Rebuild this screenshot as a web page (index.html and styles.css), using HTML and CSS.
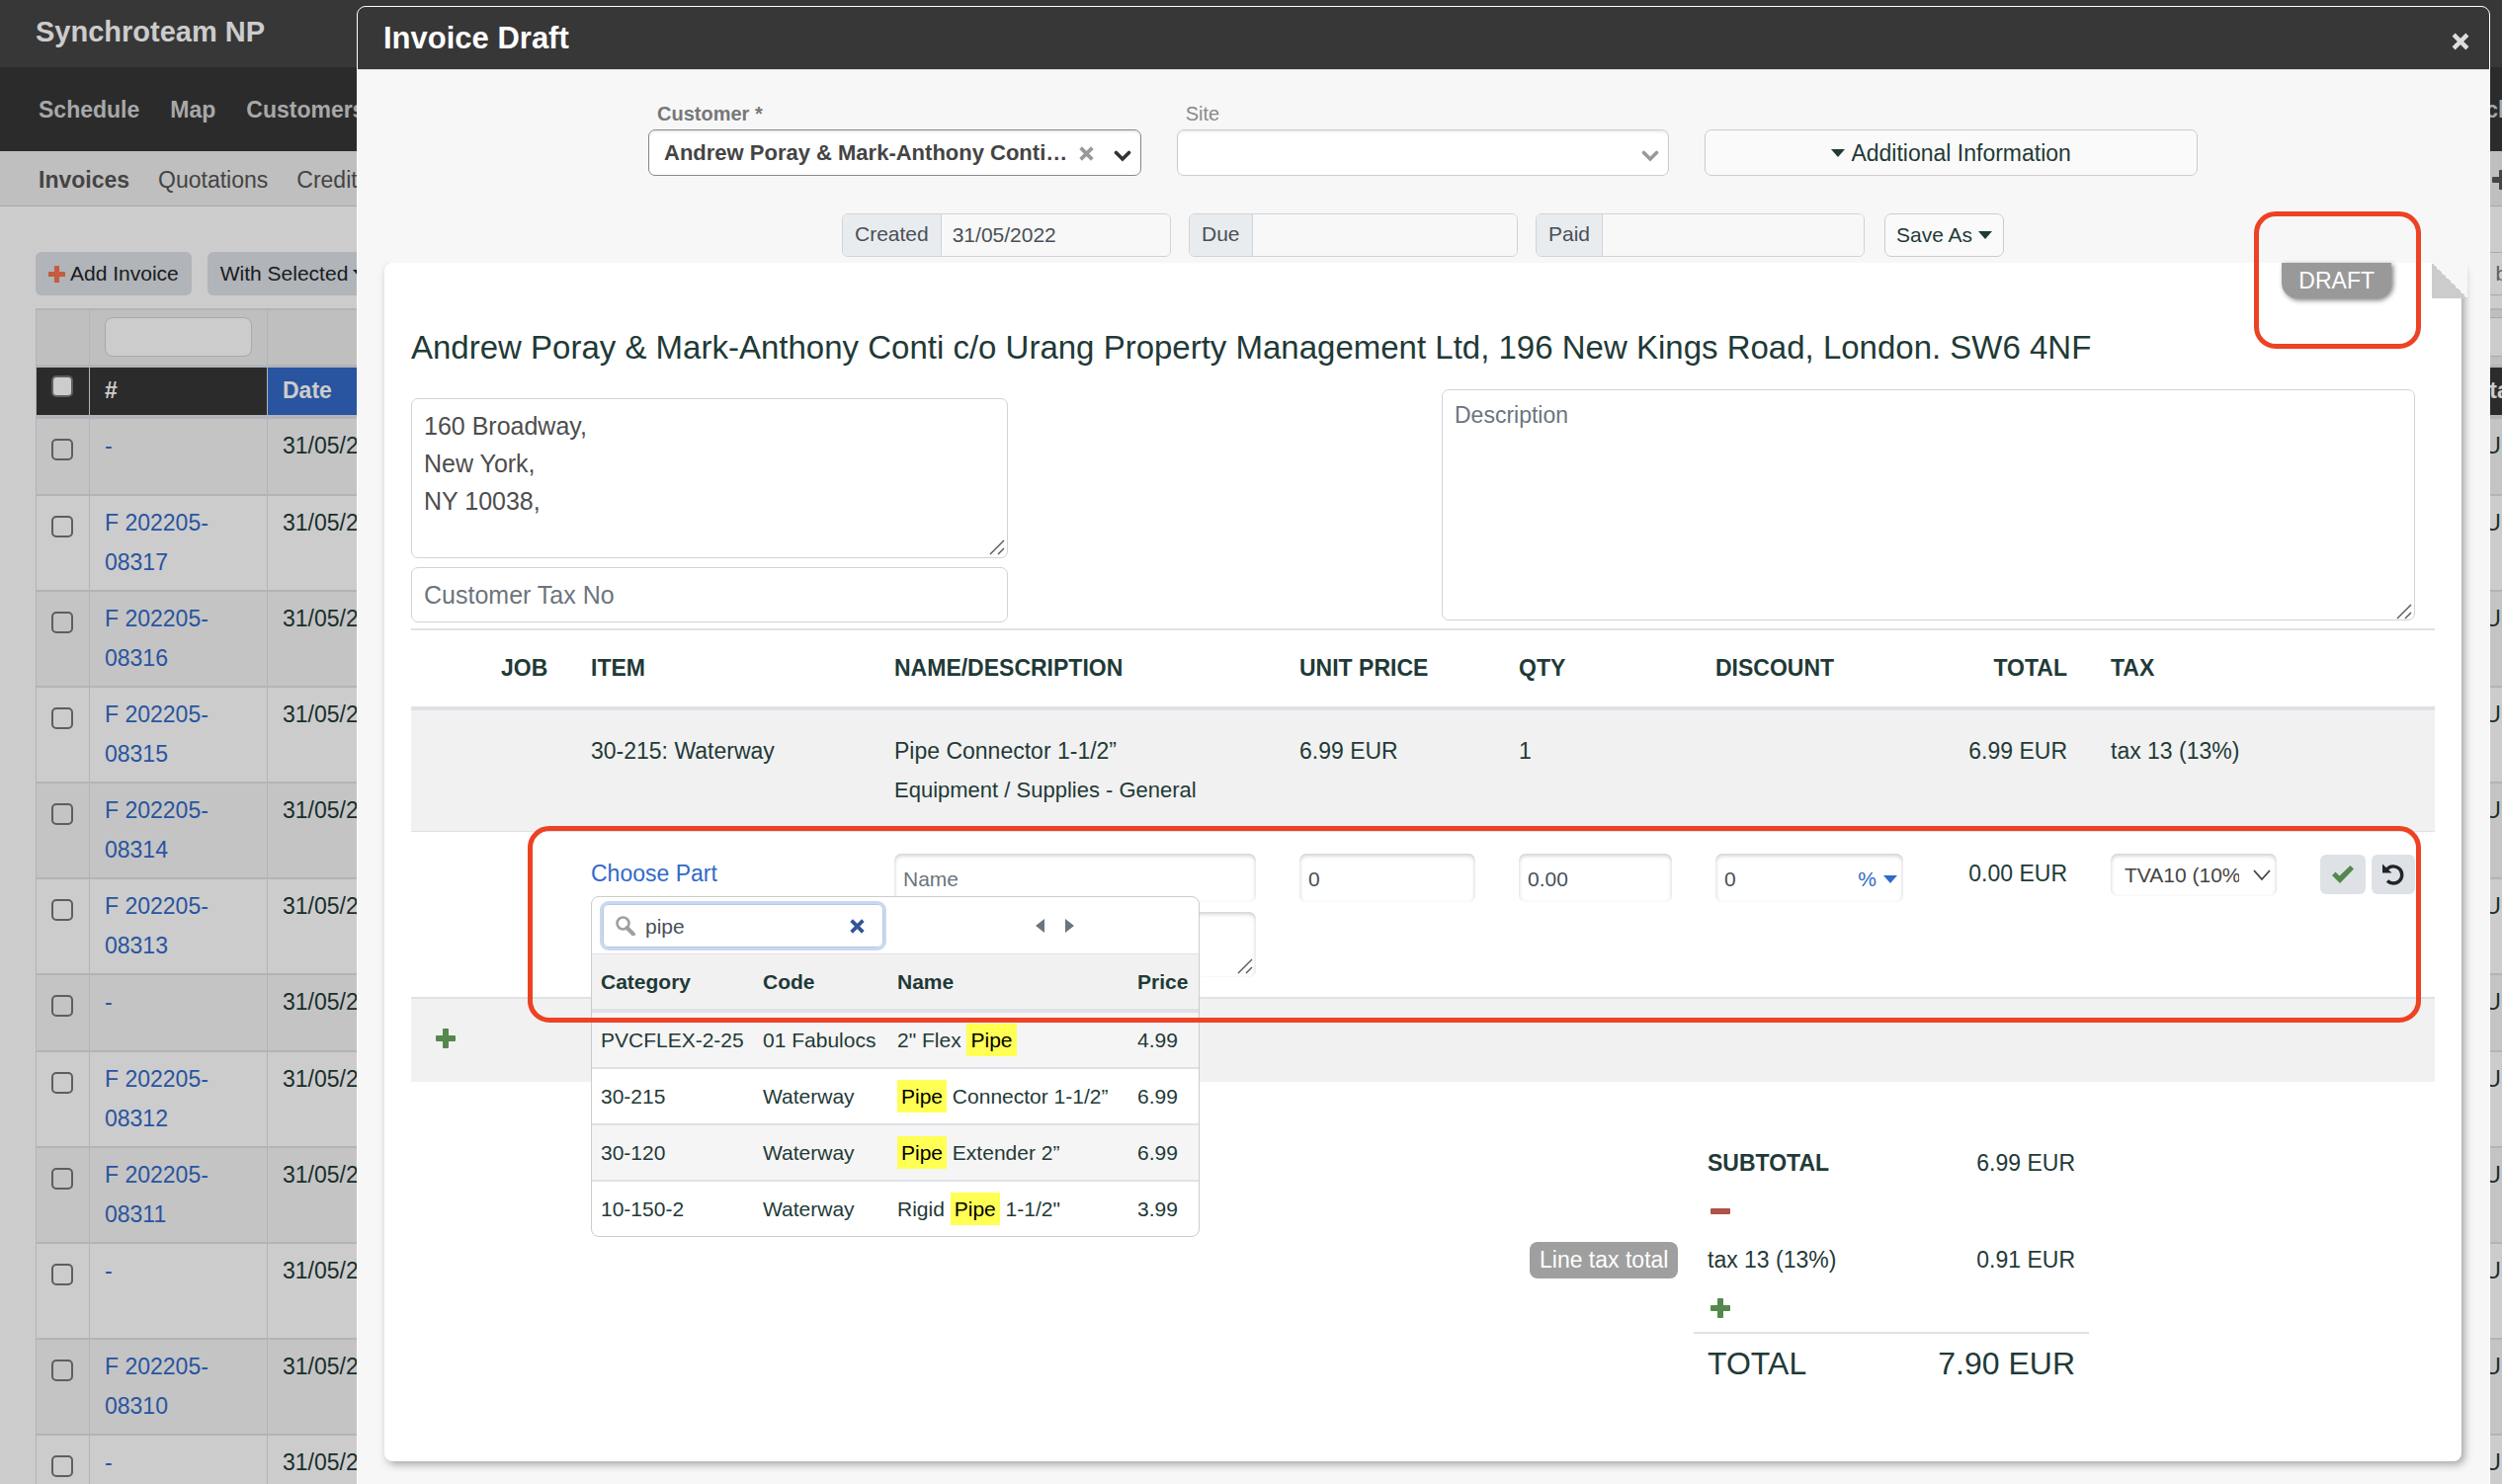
FILE: index.html
```html
<!DOCTYPE html>
<html lang="en">
<head>
  <meta charset="UTF-8" />
  <meta name="viewport" content="width=device-width, initial-scale=1.0" />
  <title>Invoice Draft - Synchroteam NP</title>
  <link rel="stylesheet" href="styles.css">
</head>

<body>

  <!-- Shared icons -->
  <svg class="sprite" aria-hidden="true">
    <symbol id="i-plus" viewBox="0 0 20 20">
      <rect x="0" y="7" width="20" height="6" rx="1" />
      <rect x="7" y="0" width="6" height="20" rx="1" />
    </symbol>
    <symbol id="i-minus" viewBox="0 0 20 20">
      <rect x="0" y="7" width="20" height="6" rx="1" />
    </symbol>
    <symbol id="i-times" viewBox="0 0 16 16">
      <path d="M2.500 2.500L13.500 13.500M13.500 2.500L2.500 13.500" fill="none" stroke="currentColor" stroke-width="3.5" stroke-linecap="butt" />
    </symbol>
    <symbol id="i-chevron" viewBox="0 0 18 12">
      <path d="M2.500 2.500L9 9L15.500 2.500" fill="none" stroke="currentColor" stroke-width="3.6" stroke-linecap="round" />
    </symbol>
    <symbol id="i-chevron-thin" viewBox="0 0 18 12">
      <path d="M1 1L9 10L17 1" fill="none" stroke="currentColor" stroke-width="1.8" />
    </symbol>
    <symbol id="i-caret" viewBox="0 0 14 8">
      <path d="M0 0H14L7 8Z" />
    </symbol>
    <symbol id="i-check" viewBox="0 0 22 18">
      <path d="M0 10L3.500 6.500L7.500 10.500L18.500 0L22 3.500L8 18Z" />
    </symbol>
    <symbol id="i-undo" viewBox="0 0 22 22">
      <path d="M4.500 6A8.600 8.600 0 1 1 5 17.500" fill="none" stroke="currentColor" stroke-width="3.4" />
      <path d="M0 0.500L9.500 9.500H0Z" />
    </symbol>
    <symbol id="i-search" viewBox="0 0 20 20">
      <circle cx="7.500" cy="7.500" r="6" fill="none" stroke="currentColor" stroke-width="2.6" />
      <path d="M11.500 12L18 18.500" fill="none" stroke="currentColor" stroke-width="4" stroke-linecap="round" />
    </symbol>
    <symbol id="i-grip" viewBox="0 0 16 16">
      <path d="M1 15L15 1M9 15L15 9" fill="none" stroke="currentColor" stroke-width="1.4" />
    </symbol>
  </svg>

  <!-- Invoice list behind the modal -->
  <div class="page">
    <header class="topbar">Synchroteam NP</header>

    <nav class="main-nav">
      <a href="#">Schedule</a>
      <a href="#">Map</a>
      <a href="#">Customers</a>
      <a href="#" class="push">Search</a>
    </nav>

    <nav class="sub-nav">
      <a href="#" class="active">Invoices</a>
      <a href="#">Quotations</a>
      <a href="#">Credit Notes</a>
      <a href="#" class="push" aria-label="Add"><svg class="icon-20"><use href="#i-plus" /></svg></a>
    </nav>

    <main class="list">
      <div class="toolbar">
        <button class="btn"><svg class="icon-17 orange"><use href="#i-plus" /></svg>Add Invoice</button>
        <button class="btn">With Selected <svg class="caret"><use href="#i-caret" /></svg></button>
        <input type="text" class="filter-by" placeholder="Filter by" aria-label="Filter by" />
      </div>

      <table class="invoices">
        <colgroup>
          <col class="c-check"><col class="c-no"><col class="c-date"><col><col class="c-total">
        </colgroup>
        <thead>
          <tr class="filters">
            <td></td>
            <td><input type="text" aria-label="Filter number" /></td>
            <td></td>
            <td></td>
            <td><input type="text" aria-label="Filter status" /></td>
          </tr>
          <tr class="heads">
            <th><input type="checkbox" aria-label="Select all" /></th>
            <th>#</th>
            <th class="sorted">Date</th>
            <th></th>
            <th class="status">Status</th>
          </tr>
        </thead>
        <tbody>
          <tr>
            <td><input type="checkbox" aria-label="Select" /></td>
            <td><a href="#">-</a></td><td>31/05/2022</td><td></td><td>EUR</td>
          </tr>
          <tr>
            <td><input type="checkbox" aria-label="Select" /></td>
            <td><a href="#">F 202205-<br>08317</a></td><td>31/05/2022</td><td></td><td>EUR</td>
          </tr>
          <tr>
            <td><input type="checkbox" aria-label="Select" /></td>
            <td><a href="#">F 202205-<br>08316</a></td><td>31/05/2022</td><td></td><td>EUR</td>
          </tr>
          <tr>
            <td><input type="checkbox" aria-label="Select" /></td>
            <td><a href="#">F 202205-<br>08315</a></td><td>31/05/2022</td><td></td><td>EUR</td>
          </tr>
          <tr>
            <td><input type="checkbox" aria-label="Select" /></td>
            <td><a href="#">F 202205-<br>08314</a></td><td>31/05/2022</td><td></td><td>EUR</td>
          </tr>
          <tr>
            <td><input type="checkbox" aria-label="Select" /></td>
            <td><a href="#">F 202205-<br>08313</a></td><td>31/05/2022</td><td></td><td>EUR</td>
          </tr>
          <tr>
            <td><input type="checkbox" aria-label="Select" /></td>
            <td><a href="#">-</a></td><td>31/05/2022</td><td></td><td>EUR</td>
          </tr>
          <tr>
            <td><input type="checkbox" aria-label="Select" /></td>
            <td><a href="#">F 202205-<br>08312</a></td><td>31/05/2022</td><td></td><td>EUR</td>
          </tr>
          <tr>
            <td><input type="checkbox" aria-label="Select" /></td>
            <td><a href="#">F 202205-<br>08311</a></td><td>31/05/2022</td><td></td><td>EUR</td>
          </tr>
          <tr class="tall">
            <td><input type="checkbox" aria-label="Select" /></td>
            <td><a href="#">-</a></td><td>31/05/2022</td><td></td><td>EUR</td>
          </tr>
          <tr>
            <td><input type="checkbox" aria-label="Select" /></td>
            <td><a href="#">F 202205-<br>08310</a></td><td>31/05/2022</td><td></td><td>EUR</td>
          </tr>
          <tr>
            <td><input type="checkbox" aria-label="Select" /></td>
            <td><a href="#">-</a></td><td>31/05/2022</td><td></td><td>EUR</td>
          </tr>
        </tbody>
      </table>
    </main>
  </div>

  <!-- Modal -->
  <div class="backdrop">
    <div class="modal" role="dialog" aria-labelledby="modalTitle">
      <div class="modal-header">
        <h1 id="modalTitle">Invoice Draft</h1>
        <button class="close" aria-label="Close"><svg class="icon-20"><use href="#i-times" /></svg></button>
      </div>

      <div class="modal-body">
        <div class="pickers">
          <div class="picker required">
            <label for="customer">Customer *</label>
            <div class="select-box">
              <select id="customer">
                <option>Andrew Poray &amp; Mark-Anthony Conti…</option>
              </select>
              <button class="clear" aria-label="Clear customer"><svg class="icon-17"><use href="#i-times" /></svg></button>
              <svg class="chevron"><use href="#i-chevron" /></svg>
            </div>
          </div>
          <div class="picker">
            <label for="site">Site</label>
            <div class="select-box">
              <select id="site"><option></option></select>
              <svg class="chevron"><use href="#i-chevron" /></svg>
            </div>
          </div>
          <button class="more-info"><svg class="caret"><use href="#i-caret" /></svg>Additional Information</button>
        </div>

        <div class="dates">
          <div class="date-group">
            <label for="created">Created</label>
            <input type="text" id="created" value="31/05/2022" />
          </div>
          <div class="date-group">
            <label for="due">Due</label>
            <input type="text" id="due" />
          </div>
          <div class="date-group">
            <label for="paid">Paid</label>
            <input type="text" id="paid" />
          </div>
          <button class="save-as">Save As <svg class="caret"><use href="#i-caret" /></svg></button>
        </div>

        <div class="paper">
          <div class="fold"></div>
          <div class="draft">DRAFT</div>

          <h2>Andrew Poray &amp; Mark-Anthony Conti c/o Urang Property Management Ltd, 196 New Kings Road, London. SW6 4NF</h2>

          <div class="details">
            <div class="customer-side">
              <div class="area">
                <textarea class="address" aria-label="Address">160 Broadway,
New York,
NY 10038,</textarea>
                <svg class="grip"><use href="#i-grip" /></svg>
              </div>
              <input type="text" class="tax-no" placeholder="Customer Tax No" aria-label="Customer Tax No" />
            </div>
            <div class="area description">
              <textarea placeholder="Description" aria-label="Description"></textarea>
              <svg class="grip"><use href="#i-grip" /></svg>
            </div>
          </div>

          <!-- Invoice lines -->
          <table class="lines">
            <colgroup>
              <col class="l-add"><col class="l-job"><col class="l-item"><col><col class="l-price">
              <col class="l-qty"><col class="l-discount"><col class="l-total"><col class="l-tax"><col class="l-actions">
            </colgroup>
            <thead>
              <tr>
                <th></th>
                <th>JOB</th>
                <th>ITEM</th>
                <th>NAME/DESCRIPTION</th>
                <th>UNIT PRICE</th>
                <th>QTY</th>
                <th>DISCOUNT</th>
                <th class="right">TOTAL</th>
                <th>TAX</th>
                <th></th>
              </tr>
            </thead>
            <tbody>
              <tr class="shaded">
                <td></td>
                <td></td>
                <td>30-215: Waterway</td>
                <td>
                  Pipe Connector 1-1/2”
                  <div class="line-note">Equipment / Supplies - General</div>
                </td>
                <td>6.99 EUR</td>
                <td>1</td>
                <td></td>
                <td class="right">6.99 EUR</td>
                <td>tax 13 (13%)</td>
                <td></td>
              </tr>
              <tr class="editing">
                <td></td>
                <td></td>
                <td>
                  <div class="part">
                    <a href="#">Choose Part</a>

                    <!-- Part search results -->
                    <div class="part-menu">
                      <div class="part-search">
                        <div class="search-box">
                          <svg class="icon-20 grey"><use href="#i-search" /></svg>
                          <input type="text" value="pipe" aria-label="Search part" />
                          <button class="reset" aria-label="Clear search"><svg class="icon-17"><use href="#i-times" /></svg></button>
                        </div>
                        <div class="pager">
                          <button aria-label="Previous"><svg viewBox="0 0 9 14"><path d="M9 0V14L0 7Z" /></svg></button>
                          <button aria-label="Next"><svg viewBox="0 0 9 14"><path d="M0 0V14L9 7Z" /></svg></button>
                        </div>
                      </div>
                      <table class="parts">
                        <colgroup>
                          <col class="p-category"><col class="p-code"><col><col class="p-price">
                        </colgroup>
                        <thead>
                          <tr><th>Category</th><th>Code</th><th>Name</th><th>Price</th></tr>
                        </thead>
                        <tbody>
                          <tr><td>PVCFLEX-2-25</td><td>01 Fabulocs</td><td>2" Flex <mark>Pipe</mark></td><td>4.99</td></tr>
                          <tr><td>30-215</td><td>Waterway</td><td><mark>Pipe</mark> Connector 1-1/2”</td><td>6.99</td></tr>
                          <tr><td>30-120</td><td>Waterway</td><td><mark>Pipe</mark> Extender 2”</td><td>6.99</td></tr>
                          <tr><td>10-150-2</td><td>Waterway</td><td>Rigid <mark>Pipe</mark> 1-1/2"</td><td>3.99</td></tr>
                        </tbody>
                      </table>
                    </div>
                  </div>
                </td>
                <td>
                  <input type="text" class="field" placeholder="Name" aria-label="Name" />
                  <div class="area note">
                    <textarea class="field" aria-label="Line description"></textarea>
                    <svg class="grip"><use href="#i-grip" /></svg>
                  </div>
                </td>
                <td><input type="text" class="field" value="0" aria-label="Unit price" /></td>
                <td><input type="text" class="field" value="0.00" aria-label="Quantity" /></td>
                <td>
                  <div class="field discount">
                    <input type="text" value="0" aria-label="Discount" />
                    <button>% <svg class="caret"><use href="#i-caret" /></svg></button>
                  </div>
                </td>
                <td class="right">0.00 EUR</td>
                <td>
                  <div class="select-box tax">
                    <select class="field" aria-label="Tax"><option>TVA10 (10%)</option></select>
                    <svg class="chevron"><use href="#i-chevron-thin" /></svg>
                  </div>
                </td>
                <td class="actions">
                  <div class="action-row">
                    <button class="confirm" aria-label="Confirm"><svg viewBox="0 0 22 18"><use href="#i-check" /></svg></button>
                    <button class="undo" aria-label="Undo"><svg viewBox="0 0 22 22"><use href="#i-undo" /></svg></button>
                  </div>
                </td>
              </tr>
              <tr class="shaded add-row">
                <td colspan="10"><button class="bare" aria-label="Add line"><svg class="icon-20 green"><use href="#i-plus" /></svg></button></td>
              </tr>
            </tbody>
          </table>

          <table class="totals">
            <tbody>
              <tr>
                <td></td>
                <th>SUBTOTAL</th>
                <td class="amount">6.99 EUR</td>
              </tr>
              <tr>
                <td></td>
                <td colspan="2"><button class="bare" aria-label="Remove tax"><svg class="icon-20 red"><use href="#i-minus" /></svg></button></td>
              </tr>
              <tr>
                <td class="tag-cell"><span class="tag">Line tax total</span></td>
                <td>tax 13 (13%)</td>
                <td class="amount">0.91 EUR</td>
              </tr>
              <tr>
                <td></td>
                <td colspan="2"><button class="bare" aria-label="Add tax"><svg class="icon-20 green"><use href="#i-plus" /></svg></button></td>
              </tr>
              <tr class="grand">
                <td></td>
                <td>TOTAL</td>
                <td class="amount">7.90 EUR</td>
              </tr>
            </tbody>
          </table>

          <!-- Callouts -->
          <div class="callout callout-draft"></div>
          <div class="callout callout-line"></div>
        </div>
      </div>
    </div>
  </div>

</body>
</html>
```
FILE: styles.css
```css
* {
  box-sizing: border-box;
}
body {
  margin: 0;
  height: 100vh;
  overflow: hidden;
  font-family: "Liberation Sans", Arial, sans-serif;
  font-size: 23px;
  line-height: 40px;
  color: #1f3a37;
  background: #fff;
}
a {
  color: #326ac8;
  text-decoration: none;
}
button, input, select, textarea {
  font: inherit;
  font-size: 21px;
  color: inherit;
  margin: 0;
}
button {
  padding: 0;
  border: 0;
  background: none;
}
table {
  border-collapse: separate;
  border-spacing: 0;
}
th {
  text-align: left;
}
svg {
  fill: currentColor;
  flex: none;
}
.sprite {
  position: absolute;
  width: 0;
  height: 0;
}
.icon-20 {
  width: 20px;
  height: 20px;
  display: block;
}
.icon-17 {
  width: 17px;
  height: 17px;
  display: block;
}
.caret {
  width: 14px;
  height: 8px;
}
.green {
  color: #55884d;
}
.red {
  color: #ae524a;
}
.orange {
  color: #f5734f;
}
.grey {
  color: #a0a0a0;
}
.right {
  text-align: right;
}

/* invoice list */
.page {
  width: calc(100% + 120px);
}
.topbar {
  height: 68px;
  padding: 0 36px;
  line-height: 64px;
  font-size: 29px;
  font-weight: bold;
  color: #fff;
  background: #454545;
}
.main-nav, .sub-nav {
  display: flex;
  align-items: center;
  gap: 29px;
  padding: 0 110px 0 39px;
}
.main-nav {
  height: 85px;
  gap: 31px;
  font-weight: bold;
  background: #363636;
}
.main-nav a {
  color: #d2d2d2;
}
.sub-nav {
  height: 56px;
  padding-top: 2px;
  background: #efefef;
  border-bottom: 1px solid #d4d4d4;
}
.sub-nav a {
  color: #555;
}
.sub-nav .active {
  font-weight: bold;
}
.push {
  margin-left: auto;
}
.list {
  padding: 46px 0 0 36px;
}
.toolbar {
  display: flex;
  gap: 16px;
  margin-bottom: 13px;
}
.btn {
  display: flex;
  align-items: center;
  gap: 5px;
  height: 44px;
  padding: 0 13px;
  border-radius: 6px;
  background: #dee2e6;
  color: #212529;
}
.filter-by {
  width: 180px;
  height: 44px;
  margin-left: auto;
  margin-right: 12px;
  padding: 0 12px;
  border: 1px solid #ced4da;
  border-radius: 6px;
}
.invoices {
  width: 100%;
  table-layout: fixed;
  border: 2px solid #dee2e6;
  border-width: 2px 0 0 1px;
}
.c-check {
  width: 54px;
}
.c-no {
  width: 180px;
}
.c-date {
  width: 160px;
}
.c-total {
  width: 168px;
}
.invoices td, .invoices th {
  padding: 7px 15px 8px;
  vertical-align: top;
  border-right: 1px solid #dee2e6;
}
.invoices .filters td {
  height: 57px;
  background: #efefef;
  border-bottom: 3px solid #dee2e6;
}
.filters input {
  display: block;
  width: 100%;
  height: 40px;
  border: 1px solid #d4d4d4;
  border-radius: 8px;
  background: #fff;
}
.invoices .heads th {
  height: 52px;
  padding-top: 3px;
  padding-bottom: 5px;
  background: #363636;
  color: #fff;
  border-bottom: 4px solid #dee2e6;
}
.invoices .heads .sorted {
  background: #326ac8;
}
.invoices .heads .status {
  padding-left: 20px;
}
.invoices tbody td {
  height: 78px;
  border-bottom: 2px solid #dee2e6;
}
.invoices .tall td {
  height: 97px;
}
.invoices tbody tr:nth-child(odd) {
  background: #f5f5f5;
}
.invoices input[type="checkbox"] {
  appearance: none;
  display: block;
  width: 22px;
  height: 22px;
  margin-top: 13px;
  border: 2px solid #767676;
  border-radius: 5px;
  background: #fff;
}
.invoices tbody input[type="checkbox"] {
  background: none;
}
.invoices .heads input[type="checkbox"] {
  margin-top: 5px;
}

/* modal */
.backdrop {
  position: fixed;
  inset: 0;
  overflow: hidden;
  padding: 6px 12px 0 361px;
  background: rgba(0, 0, 0, 0.2);
}
.modal {
  border: 1px solid #fff;
  border-radius: 9px;
  overflow: hidden;
  background: #f7f7f7;
}
.modal-header {
  display: flex;
  justify-content: space-between;
  align-items: center;
  height: 64px;
  padding: 0 19px 0 26px;
  background: #373737;
  border-bottom: 1px solid #dee2e6;
  color: #fff;
}
.modal-header h1 {
  margin: 0;
  font-size: 31px;
}
.close {
  color: #ddd;
  padding-top: 6px;
}
.modal-body {
  padding: 32px 28px 60px 27px;
}
.pickers {
  display: grid;
  grid-template-columns: repeat(3, 1fr);
  gap: 36px;
  align-items: end;
  width: 75%;
  max-width: 1568px;
  margin: 0 auto 38px;
}
.picker label {
  display: block;
  margin: 0 0 4px 9px;
  line-height: 24px;
  font-size: 20px;
  color: #8a8a8a;
}
.picker.required label {
  font-weight: bold;
  color: #777;
}
.select-box {
  position: relative;
}
.select-box select {
  appearance: none;
  display: block;
  width: 100%;
  height: 47px;
  padding: 0 70px 0 15px;
  font-size: 22px;
  color: #444;
  border: 1px solid #ccc;
  border-radius: 7px;
  background: #fff;
  box-shadow: inset 0 2px 2px #eee;
}
.required select {
  font-weight: bold;
  border-color: #888;
}
.select-box .chevron {
  position: absolute;
  right: 10px;
  top: 21px;
  width: 18px;
  height: 12px;
  color: #999;
}
.required .chevron {
  color: #333;
}
.clear {
  position: absolute;
  right: 47px;
  top: 16px;
  color: #999;
}
.more-info, .save-as {
  display: flex;
  align-items: center;
  justify-content: center;
  border: 1px solid #ccc;
  border-radius: 7px;
  background: #fafafa;
}
.more-info {
  gap: 6px;
  height: 47px;
  font-size: 23px;
}
.save-as {
  gap: 6px;
  height: 44px;
  margin-left: 2px;
  padding: 0 11px;
}
.dates {
  display: flex;
  justify-content: center;
  gap: 18px;
  margin-bottom: 6px;
}
.date-group {
  display: flex;
  width: 333px;
  height: 44px;
  border: 1px solid #ced4da;
  border-radius: 6px;
  overflow: hidden;
  color: #495057;
}
.date-group label {
  padding: 0 12px;
  font-size: 21px;
  background: #e9ecef;
  border-right: 1px solid #ced4da;
}
.date-group input {
  flex: 1;
  min-width: 0;
  padding: 0 11px;
  border: 0;
  background: #f8f8f8;
}

/* paper */
.paper {
  position: relative;
  padding: 66px 27px 70px;
  border-radius: 8px;
  background: #fff;
  box-shadow: 3px 3px 8px rgba(0, 0, 0, 0.35);
}
/* hides the top of the shadow over the grey area */
.paper::before {
  content: "";
  position: absolute;
  left: 0;
  right: -12px;
  top: -6px;
  height: 6px;
  background: #f7f7f7;
}
.fold {
  position: absolute;
  top: 0;
  right: -6px;
  width: 36px;
  height: 36px;
  background: linear-gradient(45deg, #ccc 50%, #f7f7f7 50%);
}
.draft {
  position: absolute;
  top: 0;
  right: 71px;
  padding: 0 17px;
  line-height: 36px;
  color: #fff;
  background: #999;
  border-radius: 0 0 16px 16px;
  box-shadow: 2px 2px 5px rgba(0, 0, 0, 0.5);
}
.paper h2 {
  margin: 0 0 22px;
  font-size: 33px;
  font-weight: normal;
}
.details {
  display: grid;
  grid-template-columns: 604fr 985fr;
  column-gap: 439px;
  padding-right: 20px;
}
.customer-side {
  padding-top: 9px;
}
.area {
  position: relative;
}
.area textarea, .tax-no {
  display: block;
  width: 100%;
  padding: 8px 12px;
  border: 1px solid #ced4da;
  border-radius: 7px;
  background: #fff;
  resize: none;
}
.area .address {
  height: 162px;
  font-size: 25px;
  line-height: 38px;
  color: #4d4d4d;
}
.tax-no {
  height: 56px;
  margin-top: 9px;
  font-size: 25px;
}
.description textarea {
  height: 234px;
  padding-top: 5px;
  font-size: 23px;
}
::placeholder {
  color: #6c757d;
  opacity: 1;
}
.grip {
  position: absolute;
  right: 3px;
  bottom: 3px;
  width: 16px;
  height: 16px;
  color: #555;
}

/* invoice lines */
.lines {
  width: 100%;
  margin-top: 6px;
  table-layout: fixed;
  border-top: 2px solid #dee2e6;
}
.l-add {
  width: 69px;
}
.l-job {
  width: 91px;
}
.l-item {
  width: 307px;
}
.l-price {
  width: 222px;
}
.l-qty {
  width: 199px;
}
.l-discount {
  width: 234px;
}
.l-total {
  width: 166px;
}
.l-tax {
  width: 212px;
}
.l-actions {
  width: 138px;
}
.lines > thead th {
  padding: 18px 22px 19px;
  border-bottom: 4px solid #dee2e6;
}
.lines > tbody > tr > td {
  padding: 21px 22px;
  vertical-align: top;
}
.lines .shaded {
  background: #f1f1f1;
}
.line-note {
  font-size: 22px;
}
.lines > tbody > .editing > td {
  padding-top: 22px;
  padding-bottom: 20px;
  border-top: 1px solid #dee2e6;
  border-bottom: 2px solid #dee2e6;
}
.lines > tbody > .add-row > td {
  padding: 30px 25px 34px;
}
.bare {
  display: block;
}
.field {
  display: block;
  width: 100%;
  height: 49px;
  padding: 3px 9px 0;
  border: 0;
  border-radius: 7px;
  background: #fff;
  color: #495057;
  box-shadow: inset 0 2px 4px #ccc;
}
.note {
  margin-top: 10px;
}
.note .field {
  height: 66px;
  border: 0;
}
.discount {
  display: flex;
  align-items: center;
  padding: 3px 6px 0 9px;
}
.discount input {
  flex: 1;
  min-width: 0;
  padding: 0;
  border: 0;
  background: none;
}
.discount button {
  display: flex;
  align-items: center;
  gap: 7px;
  color: #326ac8;
}
.tax .field {
  height: 43px;
  padding: 0 38px 0 14px;
  font-size: 21px;
  border: 0;
  box-shadow: inset 0 2px 4px #ccc;
}
.tax .chevron {
  right: 6px;
  top: 16px;
  color: #444;
}
.lines > tbody > tr > .actions {
  padding-right: 20px;
}
.action-row {
  display: flex;
  gap: 6px;
}
.action-row button {
  display: flex;
  align-items: center;
  justify-content: center;
  width: 46px;
  height: 40px;
  margin-top: 1px;
  border-radius: 6px;
  background: #dee2e6;
}
.action-row .undo {
  width: 44px;
  color: #212529;
}
.action-row .confirm {
  color: #55884d;
}
.action-row svg {
  width: 22px;
  height: 22px;
}

/* part search */
.part {
  position: relative;
}
.part-menu {
  position: absolute;
  left: 0;
  top: calc(100% + 3px);
  z-index: 2;
  width: 616px;
  border: 1px solid #ccc;
  border-radius: 8px;
  background: #fff;
  overflow: hidden;
}
.part-search {
  display: flex;
  align-items: center;
  height: 58px;
  padding: 0 11px;
  border-bottom: 1px solid #dee2e6;
}
.search-box {
  display: flex;
  align-items: center;
  width: 284px;
  height: 44px;
  padding: 0 12px;
  gap: 10px;
  border: 1px solid #b9c8e0;
  border-radius: 6px;
  box-shadow: 0 0 0 3px #c8d8f0;
}
.search-box input {
  flex: 1;
  min-width: 0;
  height: 40px;
  padding: 3px 0 0;
  border: 0;
  outline: none;
  background: none;
  color: #495057;
}
.search-box .reset {
  padding: 2px 5px 0 0;
  color: #34549a;
}
.pager {
  display: flex;
  gap: 21px;
  margin-left: 154px;
  color: #6c757d;
}
.pager svg {
  display: block;
  width: 9px;
  height: 14px;
}
.parts {
  width: 100%;
  table-layout: fixed;
  font-size: 21px;
}
.p-category {
  width: 164px;
}
.p-code {
  width: 136px;
}
.p-price {
  width: 71px;
}
.parts th, .parts td {
  height: 57px;
  padding: 0 0 0 9px;
  line-height: 40px;
  white-space: nowrap;
}
.parts th {
  height: 59px;
  background: #f1f1f1;
  border-bottom: 4px solid #dee2e6;
}
.parts td {
  border-bottom: 2px solid #dee2e6;
}
.parts tr:last-child td {
  height: 55px;
  border-bottom: 0;
}
.parts tbody tr:nth-child(odd) {
  background: #f5f5f5;
}
mark {
  padding: 5px 4px;
  color: #000;
  background: #ffff54;
}

/* totals */
.totals {
  width: 566px;
  margin: 57px 350px 0 auto;
  table-layout: fixed;
}
.totals td, .totals th {
  height: 49px;
  padding: 0 14px;
}
.totals td:first-child {
  width: 166px;
  padding: 0;
}
.totals th {
  width: 180px;
}
.totals .amount {
  text-align: right;
}
.totals .bare {
  padding-left: 3px;
}
.tag {
  display: inline-block;
  padding: 0 10px;
  line-height: 37px;
  white-space: nowrap;
  color: #fff;
  background: #9f9f9f;
  border-radius: 8px;
}
.totals .grand td {
  height: 61px;
  font-size: 32px;
}
.grand td + td {
  border-top: 2px solid #dee2e6;
}

/* callouts */
.callout {
  position: absolute;
  right: 41px;
  z-index: 3;
  border: 5px solid #ed4224;
  border-radius: 22px;
  pointer-events: none;
}
.callout-draft {
  top: -52px;
  width: 169px;
  height: 139px;
}
.callout-line {
  top: 570px;
  left: 145px;
  height: 199px;
}
```
